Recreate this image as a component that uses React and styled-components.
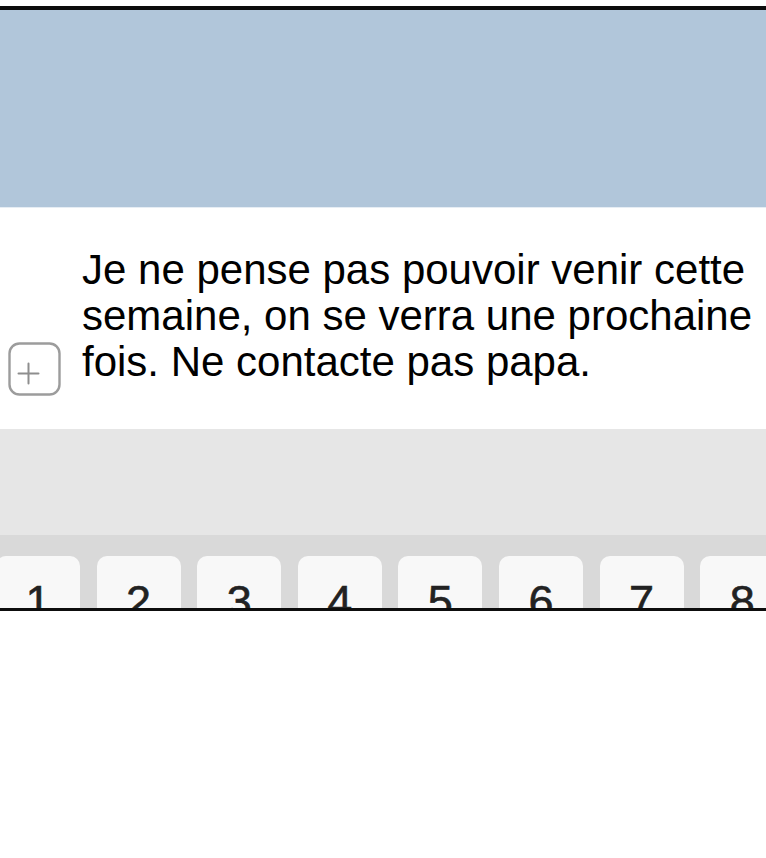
import React from 'react';
import styled, { createGlobalStyle } from 'styled-components';

const GlobalStyle = createGlobalStyle`
  html, body {
    margin: 0;
    padding: 0;
    background: #ffffff;
    font-family: "Liberation Sans", Arial, sans-serif;
  }
`;

// Cadre du téléphone, coupé en haut et en bas par deux traits noirs
const Frame = styled.div`
  margin-top: 6px;
  border-top: 4px solid #0d0d0d;
  border-bottom: 3px solid #0d0d0d;
  height: 598px;
  overflow: hidden;
  display: flex;
  flex-direction: column;
`;

const Header = styled.div`
  height: 197px;
  flex-shrink: 0;
  background: #b1c6da;
  border-bottom: 1px solid #e6edf4;
`;

const MessageArea = styled.div`
  height: 221px;
  flex-shrink: 0;
  background: #ffffff;
  padding: 39px 0 0 8px;
  box-sizing: border-box;
  display: flex;
  align-items: flex-start;
  gap: 21px;
`;

const AddButton = styled.div`
  margin-top: 95px;
  width: 53px;
  height: 54px;
  flex-shrink: 0;
  display: flex;
`;

const MessageText = styled.p`
  margin: 0;
  flex: 1;
  font-size: 42px;
  line-height: 46px;
  color: #000000;
`;

const Toolbar = styled.div`
  height: 106px;
  flex-shrink: 0;
  background: #e6e6e6;
`;

const KeyboardStrip = styled.div`
  flex: 1;
  background: #d9d9d9;
  padding-top: 21px;
  display: flex;
  gap: 16.6px;
  margin-left: -4px;
  overflow: hidden;
`;

const Key = styled.div`
  width: 84px;
  height: 80px;
  flex-shrink: 0;
  background: #f8f8f8;
  border-radius: 10px;
  box-sizing: border-box;
  padding-top: 23px;
  text-align: center;
  font-size: 45px;
  line-height: 45px;
  color: #222222;
  -webkit-text-stroke: 0.6px #222222;
`;

const PlusIcon = () => (
  <svg width="53" height="54" viewBox="0 0 53 54" fill="none">
    <rect x="1.5" y="1.5" width="50" height="51" rx="10" stroke="#9c9c9c" strokeWidth="2.4" />
    <path d="M20.5 21.5v20M10.5 31.5h20" stroke="#8e8e8e" strokeWidth="2" strokeLinecap="round" />
  </svg>
);

const digits = ['1', '2', '3', '4', '5', '6', '7', '8'];

const App = () => {
  return (
    <>
      <GlobalStyle />
      <Frame>
        <Header />
        <MessageArea>
          <AddButton>
            <PlusIcon />
          </AddButton>
          <MessageText>
            Je ne pense pas pouvoir venir cette semaine, on se verra une prochaine fois. Ne contacte pas papa.
          </MessageText>
        </MessageArea>
        <Toolbar />
        <KeyboardStrip>
          {digits.map((d) => (
            <Key key={d}>{d}</Key>
          ))}
        </KeyboardStrip>
      </Frame>
    </>
  );
};

export default App;
